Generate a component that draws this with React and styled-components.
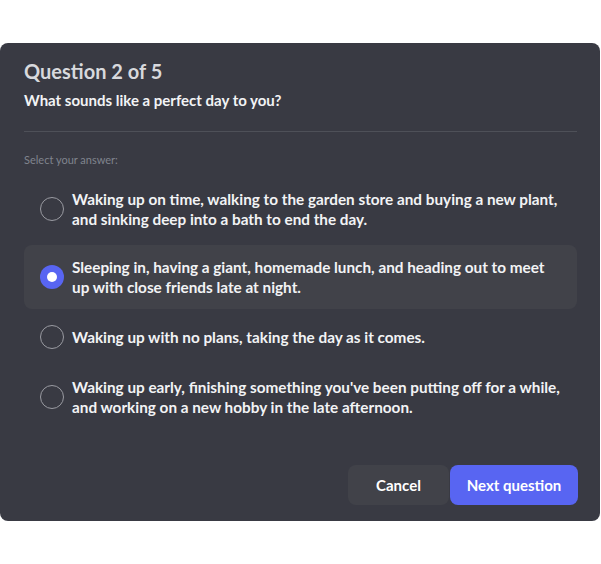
import React, { useState } from 'react';
import styled, { createGlobalStyle } from 'styled-components';

const GlobalStyle = createGlobalStyle`
  body {
    margin: 0;
    background: #ffffff;
    font-family: Lato, "Noto Sans", sans-serif;
  }
`;

const Modal = styled.div`
  margin-top: 43px;
  width: 600px;
  height: 478px;
  box-sizing: border-box;
  background: #393a43;
  border-radius: 8px;
  display: flex;
  flex-direction: column;
  padding: 16px 22px 16px 24px;
`;

const Title = styled.h1`
  margin: 0;
  font-size: 20px;
  line-height: 24px;
  font-weight: 700;
  color: #d8d9dd;
`;

const Subtitle = styled.h2`
  margin: 7px 0 0;
  font-size: 15px;
  line-height: 20px;
  font-weight: 700;
  color: #f2f3f5;
`;

const Divider = styled.hr`
  margin: 21px 1px 0 0;
  border: none;
  height: 1px;
  background: #4e5058;
`;

const Label = styled.div`
  margin-top: 20px;
  font-size: 11px;
  line-height: 16px;
  color: #80848e;
`;

const Options = styled.div`
  margin-top: 9px;
  margin-right: 1px;
  display: flex;
  flex-direction: column;
  gap: 4px;
`;

const Option = styled.label`
  display: flex;
  align-items: center;
  gap: 8px;
  padding: 12px 16px;
  border-radius: 8px;
  cursor: pointer;
  background: ${(p) => (p.$selected ? '#414249' : 'transparent')};
`;

const Radio = styled.span`
  flex: none;
  width: 24px;
  height: 24px;
  box-sizing: border-box;
  border-radius: 50%;
  border: ${(p) => (p.$selected ? 'none' : '1.5px solid #9a9ba2')};
  background: ${(p) => (p.$selected ? '#5865f2' : 'transparent')};
  display: flex;
  align-items: center;
  justify-content: center;

  &::after {
    content: '';
    display: ${(p) => (p.$selected ? 'block' : 'none')};
    width: 10px;
    height: 10px;
    border-radius: 50%;
    background: #ffffff;
  }
`;

const OptionText = styled.span`
  font-size: 15.3px;
  line-height: 20px;
  font-weight: 700;
  color: #f2f3f5;
`;

const Footer = styled.div`
  margin-top: auto;
  display: flex;
  justify-content: flex-end;
  gap: 1px;
`;

const Button = styled.button`
  height: 40px;
  padding: 0;
  width: ${(p) => (p.$primary ? '128px' : '101px')};
  border: none;
  border-radius: 8px;
  font-family: inherit;
  font-size: 15px;
  font-weight: 700;
  color: #ffffff;
  background: ${(p) => (p.$primary ? '#5865f2' : '#414249')};
  cursor: pointer;
`;

const answers = [
  'Waking up on time, walking to the garden store and buying a new plant, and sinking deep into a bath to end the day.',
  'Sleeping in, having a giant, homemade lunch, and heading out to meet up with close friends late at night.',
  'Waking up with no plans, taking the day as it comes.',
  "Waking up early, finishing something you've been putting off for a while, and working on a new hobby in the late afternoon.",
];

const App = () => {
  const [selected, setSelected] = useState(1);
  return (
    <>
      <GlobalStyle />
      <Modal>
        <Title>Question 2 of 5</Title>
        <Subtitle>What sounds like a perfect day to you?</Subtitle>
        <Divider />
        <Label>Select your answer:</Label>
        <Options>
          {answers.map((text, i) => (
            <Option key={i} $selected={selected === i} onClick={() => setSelected(i)}>
              <Radio $selected={selected === i} />
              <OptionText>{text}</OptionText>
            </Option>
          ))}
        </Options>
        <Footer>
          <Button>Cancel</Button>
          <Button $primary>Next question</Button>
        </Footer>
      </Modal>
    </>
  );
};

export default App;
